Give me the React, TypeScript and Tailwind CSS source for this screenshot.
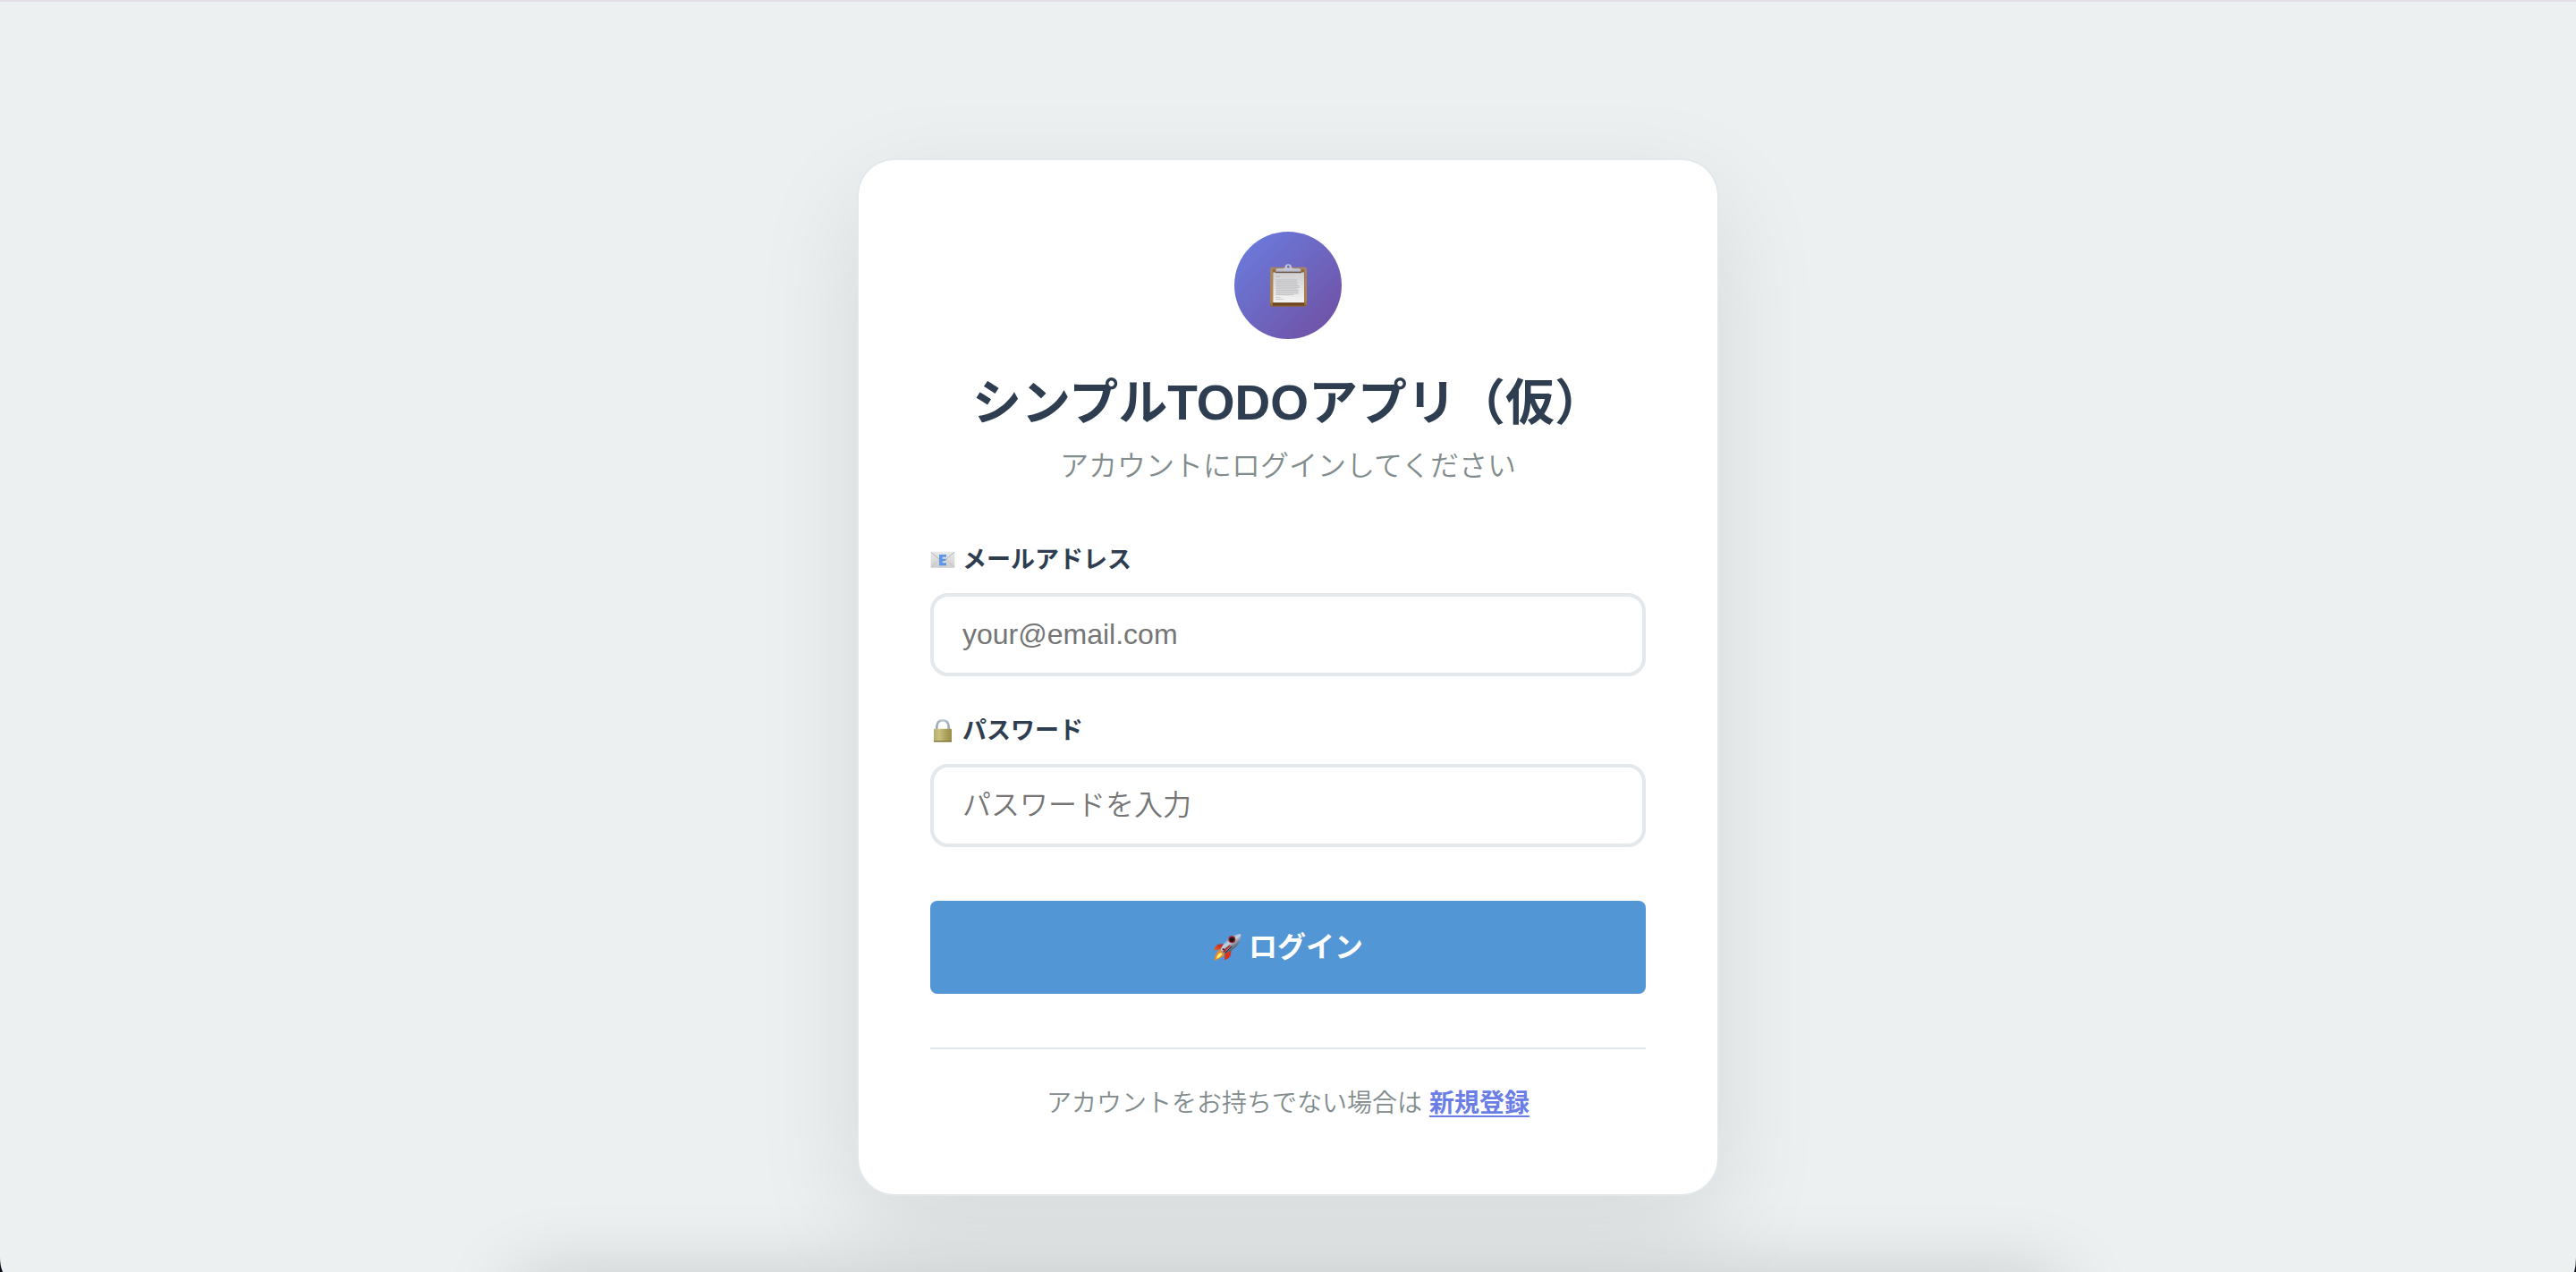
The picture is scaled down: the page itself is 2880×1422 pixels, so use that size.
import React from "react";

function ClipboardIcon() {
  return (
    <svg viewBox="0 0 123 143" className="h-12 w-[41px]" aria-hidden="true">
      <defs>
        <linearGradient id="board" x1="0" y1="0" x2="0" y2="1">
          <stop offset="0" stopColor="#a58462" />
          <stop offset="0.85" stopColor="#b08448" />
          <stop offset="1" stopColor="#8a5f2c" />
        </linearGradient>
        <linearGradient id="sheet" x1="0" y1="0" x2="0" y2="1">
          <stop offset="0" stopColor="#d0d0d2" />
          <stop offset="1" stopColor="#f4f4f4" />
        </linearGradient>
      </defs>
      <rect x="0" y="11" width="123" height="132" rx="6" fill="url(#board)" />
      <rect x="9" y="18" width="106" height="119" fill="#8f6a3a" />
      <rect x="9" y="130" width="106" height="9" fill="#6d4520" />
      <rect x="10" y="28" width="104" height="101" fill="url(#sheet)" />
      <path d="M19 42h15" stroke="#b4b4b4" strokeWidth="3" />
      <path
        d="M19 53h72M19 58h70M19 63h74M19 68h72M19 73h79M19 78h80M19 83h73M19 88h78M19 93h76M19 98h76M19 103h60"
        stroke="#c4c4c6"
        strokeWidth="3.4"
      />
      <path d="M19 112h15M19 118h25" stroke="#c4c4c4" strokeWidth="2.5" />
      <rect x="18" y="24" width="87" height="6" fill="#6b5748" />
      <path d="M19 25v-5q0-5 6-5h17l7-2q1-13 12-13t12 13l7 2h17q6 0 6 5v5z" fill="#c3c5d2" />
      <path d="M20 24h83" stroke="#a5a7b3" strokeWidth="2" />
      <circle cx="61" cy="9" r="4" fill="#6b69bd" />
    </svg>
  );
}

function EmailIcon() {
  return (
    <svg viewBox="0 0 84 84" className="size-7" aria-hidden="true">
      <defs>
        <linearGradient id="paper" x1="0" y1="0" x2="0" y2="1">
          <stop offset="0" stopColor="#e9e9e9" />
          <stop offset="1" stopColor="#cecece" />
        </linearGradient>
      </defs>
      <rect x="2" y="14" width="80" height="54" rx="2" fill="url(#paper)" />
      <path d="M4 66l28-27M80 66L52 39" stroke="#b8b8b8" strokeWidth="2" />
      <path d="M3 16l33 28q6 5 12 0l33-28" fill="none" stroke="#adadad" strokeWidth="2.5" />
      <path d="M30 24h24v8H41v6h11v7H41v7h13v9H30z" fill="#5c97e6" />
    </svg>
  );
}

function LockIcon() {
  return (
    <svg viewBox="0 0 84 84" className="size-7" aria-hidden="true">
      <defs>
        <linearGradient id="brass" x1="0" y1="0" x2="1" y2="0">
          <stop offset="0" stopColor="#b9b070" />
          <stop offset="0.3" stopColor="#cdc583" />
          <stop offset="0.7" stopColor="#aca25c" />
          <stop offset="1" stopColor="#9a8e4c" />
        </linearGradient>
        <linearGradient id="steel" x1="0" y1="0" x2="1" y2="0">
          <stop offset="0" stopColor="#9aa9bc" />
          <stop offset="0.5" stopColor="#c2cedb" />
          <stop offset="1" stopColor="#9dabbd" />
        </linearGradient>
      </defs>
      <path d="M22 40V27q2-20 20-20t20 20v13" fill="none" stroke="url(#steel)" strokeWidth="8" />
      <rect x="12" y="35" width="60" height="44" rx="2" fill="url(#brass)" />
      <path d="M13 43h58M13 51h58M13 59h58M13 67h58" stroke="#8f8240" strokeOpacity="0.25" strokeWidth="2" />
      <rect x="12" y="75" width="60" height="4" fill="#7a6b2e" />
    </svg>
  );
}

function RocketIcon() {
  return (
    <svg viewBox="0 0 96 96" className="size-8" aria-hidden="true">
      <defs>
        <linearGradient id="hull" x1="0.3" y1="0.2" x2="0.75" y2="0.8">
          <stop offset="0" stopColor="#4f7fb0" />
          <stop offset="0.35" stopColor="#c6d6e5" />
          <stop offset="0.6" stopColor="#8494a6" />
          <stop offset="1" stopColor="#333c49" />
        </linearGradient>
        <linearGradient id="fin" x1="0" y1="1" x2="1" y2="0">
          <stop offset="0" stopColor="#f0602a" />
          <stop offset="1" stopColor="#b3201c" />
        </linearGradient>
      </defs>
      <path d="M36 37L16 38Q6 46 3 58l25-3z" fill="url(#fin)" />
      <path d="M62 58l-3 20q-8 10-20 13l1-26z" fill="#d8341f" />
      <path d="M27 53q16 2 13 16-6 12-17 16-10 5-18 7 0-12 6-22 6-12 16-17z" fill="#ef8a22" />
      <path d="M25 66q8 1 6 7-6 9-19 14 1-14 13-21z" fill="#fdf07a" />
      <path d="M94 4Q70 2 50 20 34 35 26 54q0 10 14 16 22-8 38-24Q96 27 94 4z" fill="url(#hull)" />
      <path d="M32 54q8-1 8 9" fill="none" stroke="#3c2a2c" strokeWidth="5" />
      <path d="M58 42q-12 8-22 22" fill="none" stroke="#c22a20" strokeWidth="5" />
      <path d="M64 44q-10 12-22 22" fill="none" stroke="#1f1a20" strokeWidth="3" />
      <circle cx="64" cy="22" r="12" fill="#a6262a" />
      <circle cx="64" cy="22" r="8" fill="#1d1419" />
    </svg>
  );
}

type FieldProps = {
  id: string;
  label: string;
  type: string;
  placeholder: string;
  icon: React.ReactNode;
};

function Field({ id, label, type, placeholder, icon }: FieldProps) {
  return (
    <div>
      <label
        htmlFor={id}
        className="mb-4 flex items-center gap-2 text-[27px] leading-[42px] font-semibold text-[#2f3d50]"
      >
        {icon}
        {label}
      </label>
      <input
        id={id}
        type={type}
        placeholder={placeholder}
        className="block h-[93px] w-full rounded-[20px] border-4 border-[#e2e8ec] bg-white px-8 text-[32px] font-[350] text-[#2f3d50] outline-none placeholder:text-[#757575]"
      />
    </div>
  );
}

export default function App() {
  return (
    <div className="relative min-h-screen overflow-hidden border-t-2 border-[#e5dfe8] bg-[#ecf0f1] px-10 pt-[177px] pb-[85px] font-['Liberation_Sans','Noto_Sans_CJK_JP',sans-serif]">
      <main className="mx-auto w-full max-w-[960px] rounded-[40px] bg-white p-20 shadow-[0_0_0_2px_#e2e8ec,0_40px_120px_rgba(0,0,0,0.1)]">
        <header className="mb-16 flex flex-col items-center text-center">
          <div className="mb-8 flex size-[120px] items-center justify-center rounded-full bg-[linear-gradient(135deg,#6b7ee2_0%,#704e9f_100%)]">
            <ClipboardIcon />
          </div>
          <h1 className="mb-3 text-[55px] leading-[78px] font-bold whitespace-nowrap text-[#2f3d50]">
            シンプルTODOアプリ（仮）
          </h1>
          <p className="text-[32px] leading-[40px] font-[350] text-[#828c8d]">
            アカウントにログインしてください
          </p>
        </header>

        <form onSubmit={(e) => e.preventDefault()}>
          <div className="flex flex-col gap-10">
            <Field
              id="email"
              label="メールアドレス"
              type="email"
              placeholder="your@email.com"
              icon={<EmailIcon />}
            />
            <Field
              id="password"
              label="パスワード"
              type="password"
              placeholder="パスワードを入力"
              icon={<LockIcon />}
            />
          </div>
          <button
            type="submit"
            className="mt-[60px] flex h-[104px] w-full items-center justify-center gap-2 rounded-lg bg-[#5296d5] text-[32px] font-semibold text-white"
          >
            <RocketIcon />
            ログイン
          </button>
        </form>

        <footer className="mt-[60px] border-t-2 border-[#e2e8ec] pt-11 pb-1 text-center text-[28px] leading-[34px] font-[350] text-[#828c8d]">
          アカウントをお持ちでない場合は{" "}
          <a href="#register" className="font-semibold text-[#6b7ee6] underline underline-offset-4">
            新規登録
          </a>
        </footer>
      </main>

      <div className="pointer-events-none absolute top-full left-1/2 h-20 w-[1720px] -translate-x-1/2 shadow-[0_12px_90px_rgba(0,0,0,0.2)]" />
      <svg viewBox="0 0 4 16" className="absolute bottom-0 left-0 h-4 w-1" aria-hidden="true">
        <path d="M0 0Q0 9 3 16H0z" fill="#0a0a14" />
      </svg>
      <svg viewBox="0 0 4 16" className="absolute right-0 bottom-0 h-4 w-1" aria-hidden="true">
        <path d="M4 0Q4 9 2 16H4z" fill="#0a0a14" />
      </svg>
    </div>
  );
}
